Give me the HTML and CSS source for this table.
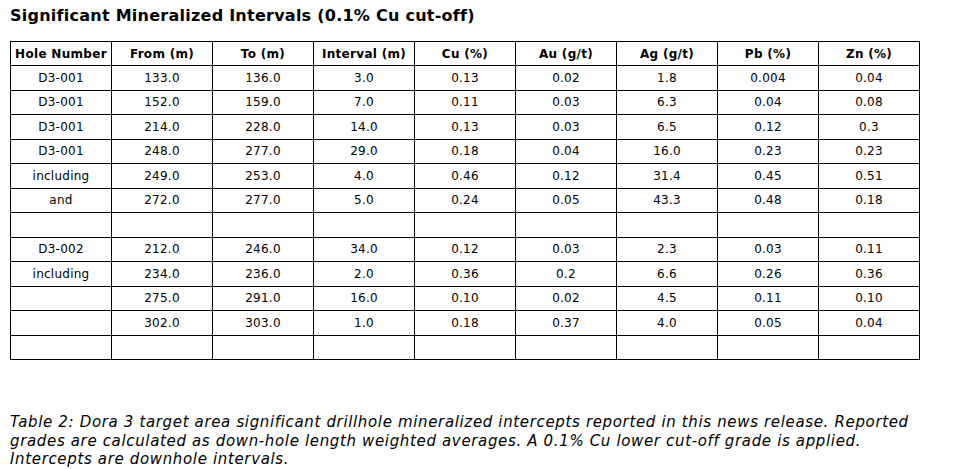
FILE: index.html
```html
<!DOCTYPE html>
<html>
<head>
<meta charset="utf-8">
<link rel="stylesheet" href="styles.css">
</head>
<body>
<div class="page">
  <h1 class="title">Significant Mineralized Intervals (0.1% Cu cut-off)</h1>
  <table class="grid">
    <thead>
      <tr><th>Hole Number</th><th>From (m)</th><th>To (m)</th><th>Interval (m)</th><th>Cu (%)</th><th>Au (g/t)</th><th>Ag (g/t)</th><th>Pb (%)</th><th>Zn (%)</th></tr>
    </thead>
    <tbody>
      <tr><td>D3-001</td><td>133.0</td><td>136.0</td><td>3.0</td><td>0.13</td><td>0.02</td><td>1.8</td><td>0.004</td><td>0.04</td></tr>
      <tr><td>D3-001</td><td>152.0</td><td>159.0</td><td>7.0</td><td>0.11</td><td>0.03</td><td>6.3</td><td>0.04</td><td>0.08</td></tr>
      <tr><td>D3-001</td><td>214.0</td><td>228.0</td><td>14.0</td><td>0.13</td><td>0.03</td><td>6.5</td><td>0.12</td><td>0.3</td></tr>
      <tr><td>D3-001</td><td>248.0</td><td>277.0</td><td>29.0</td><td>0.18</td><td>0.04</td><td>16.0</td><td>0.23</td><td>0.23</td></tr>
      <tr><td>including</td><td>249.0</td><td>253.0</td><td>4.0</td><td>0.46</td><td>0.12</td><td>31.4</td><td>0.45</td><td>0.51</td></tr>
      <tr><td>and</td><td>272.0</td><td>277.0</td><td>5.0</td><td>0.24</td><td>0.05</td><td>43.3</td><td>0.48</td><td>0.18</td></tr>
      <tr><td></td><td></td><td></td><td></td><td></td><td></td><td></td><td></td><td></td></tr>
      <tr><td>D3-002</td><td>212.0</td><td>246.0</td><td>34.0</td><td>0.12</td><td>0.03</td><td>2.3</td><td>0.03</td><td>0.11</td></tr>
      <tr><td>including</td><td>234.0</td><td>236.0</td><td>2.0</td><td>0.36</td><td>0.2</td><td>6.6</td><td>0.26</td><td>0.36</td></tr>
      <tr><td></td><td>275.0</td><td>291.0</td><td>16.0</td><td>0.10</td><td>0.02</td><td>4.5</td><td>0.11</td><td>0.10</td></tr>
      <tr><td></td><td>302.0</td><td>303.0</td><td>1.0</td><td>0.18</td><td>0.37</td><td>4.0</td><td>0.05</td><td>0.04</td></tr>
      <tr><td></td><td></td><td></td><td></td><td></td><td></td><td></td><td></td><td></td></tr>
    </tbody>
  </table>
  <p class="caption">Table 2: Dora 3 target area significant drillhole mineralized intercepts reported in this news release. Reported<br>grades are calculated as down-hole length weighted averages. A 0.1% Cu lower cut-off grade is applied.<br>Intercepts are downhole intervals.</p>
</div>
</body>
</html>
```

FILE: styles.css
```css
html, body {
  margin: 0;
  padding: 0;
  background: #ffffff;
}

.page {
  padding: 0 10px;
  font-family: "DejaVu Sans", Verdana, sans-serif;
  color: #000;
}

.title {
  margin: 6px 0 15px;
  font-size: 16px;
  line-height: 20px;
  font-weight: bold;
  letter-spacing: 0.25px;
}

.grid {
  border-collapse: collapse;
  table-layout: fixed;
  width: 910px;
  font-size: 12px;
}

.grid th,
.grid td {
  border: 1px solid #000;
  padding: 0 2px;
  text-align: center;
  white-space: nowrap;
}

.grid th {
  height: 23px;
  font-weight: bold;
  letter-spacing: 0.3px;
}

.grid td {
  height: 23.5px;
  letter-spacing: 0.25px;
}

.caption {
  margin: 53px 0 0;
  font-size: 15px;
  line-height: 18.5px;
  font-style: italic;
  letter-spacing: 0.65px;
  white-space: nowrap;
}
```
